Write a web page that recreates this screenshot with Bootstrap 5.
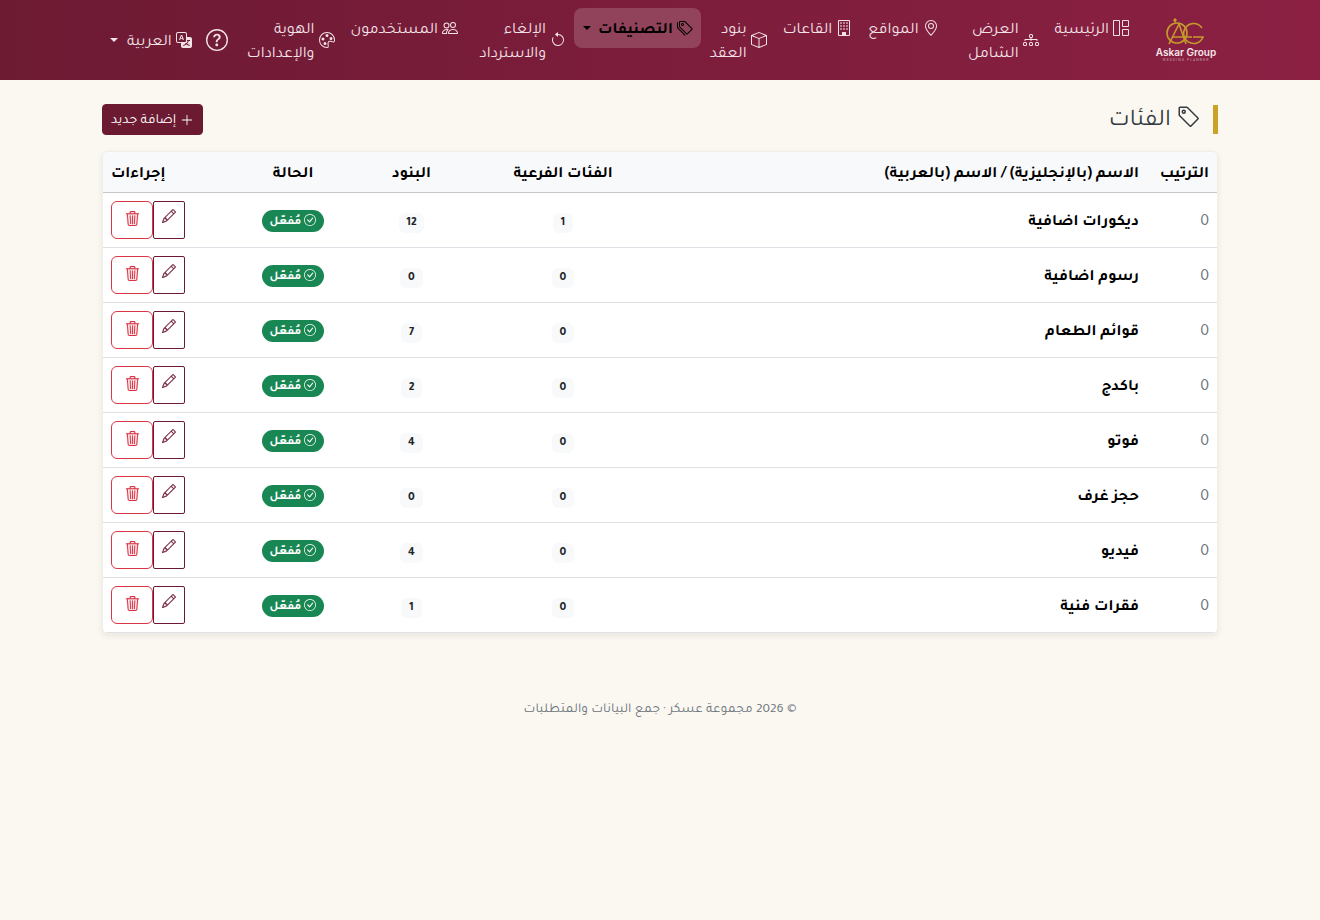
<!DOCTYPE html>
<html lang="ar" dir="rtl">
<head>
    <meta charset="UTF-8">
    <meta name="viewport" content="width=device-width, initial-scale=1.0">
    <title>الفئات</title>
    <link href="https://cdn.jsdelivr.net/npm/bootstrap@5.3.0/dist/css/bootstrap.min.css" rel="stylesheet">
    <style>
        body {
            background: #fbf8f1;
            font-family: "Tajawal", "DejaVu Sans", sans-serif;
            color: #212529;
        }
        .top-nav {
            height: 80px;
            padding: 0;
            background: linear-gradient(90deg, #6d1a33, #8b2043);
        }
        .top-nav .navbar-brand { margin: 0 0 0 18px; padding: 0; line-height: 0; }
        .top-nav .navbar-nav { align-items: flex-start; padding-right: 0; }
        .top-nav .nav-link {
            display: flex;
            align-items: center;
            gap: 4px;
            padding: 8px;
            color: #f3e3e8;
            font-size: 16px;
            line-height: 24px;
            white-space: nowrap;
            border-radius: 8px;
        }
        .top-nav .nav-link span { display: block; margin: 3px 0 -3px; }
        .top-nav .nav-link.active {
            padding-left: 9px;
            background: rgba(255,255,255,.17);
            color: #000;
            font-weight: 700;
        }
        .top-nav .dropdown-toggle::after { margin: 0 3px 0 0; }
        .top-nav .lang-toggle::after { margin-right: 5px; }
        .top-nav .nav-link .box-overview { width: 64px; }
        .top-nav .nav-link .box-undo { width: 72px; }
        .item-gap { margin-left: 1px; }
        .nav-ico { width: 16px; height: 16px; flex: none; fill: currentColor; }
        .help-ico { width: 22px; height: 22px; fill: #f3e3e8; }
        .nav-tools { gap: 6px; }
        .page-head { margin: 24px 0 16px; }
        .page-title { font-size: 24px; font-weight: 400; color: #343a40; border-right: 5px solid #c9a227; padding-right: 12px; margin: 0; line-height: 29px; gap: 6px; }
        .page-title svg { width: 24px; height: 24px; fill: currentColor; align-self: flex-start; }
        .page-title span { display: block; margin: 3px 0 -3px; }
        .add-btn, .add-btn:hover { background: #6b1a32; border-color: #6b1a32; color: #fff; }
        .add-btn svg { width: 14px; height: 14px; fill: currentColor; }
        .add-btn span { display: block; margin: 2px 0 -2px; }
        .cat-card { border-radius: 6px; border-color: #f1eee8; overflow: hidden; box-shadow: 0 2px 6px rgba(0,0,0,.08); }
        .cat-table { table-layout: fixed; margin: 0; font-size: 16px; }
        .cat-table th { padding: 11px 8px 5px; background: #f8f9fa; color: #000; font-weight: 700; vertical-align: middle; text-align: right; white-space: nowrap; border-bottom: 1px solid #c6c8ca; }
        .cat-table td { padding: 11px 8px 5px; vertical-align: middle; text-align: right; border-bottom: 1px solid #dee2e6; }
        .cat-table .col-mid { text-align: center; padding-right: 0; padding-left: 0; }
        .cat-table td.col-status { padding-top: 10px; padding-bottom: 6px; }
        .cat-table .col-act { text-align: left; }
        .cat-table td.col-act { padding: 8px; }
        .w-order { width: 70px; }
        .w-name { width: 452px; }
        .w-sub { width: 264px; }
        .w-items { width: 39px; }
        .w-status { width: 198px; }
        .w-act { width: 91px; }
        .order-num { color: #6c757d; }
        .cat-name { font-weight: 700; color: #000; }
        .status-ico { width: 12px; height: 12px; fill: currentColor; vertical-align: -2px; margin-left: 3px; }
        .act-wrap { display: flex; flex-direction: row-reverse; justify-content: flex-end; width: 74px; margin-right: auto; }
        .del-btn, .edit-btn { display: flex; align-items: flex-start; justify-content: center; height: 38px; padding: 0; background: #fff; }
        .del-btn { width: 42px; padding-top: 9px; border: 1px solid #dc3545; border-radius: 6px; color: #dc3545; }
        .edit-btn { width: 32px; padding-top: 7px; border: 1px solid #6b1a32; border-radius: 2px; color: #6b1a32; }
        .del-btn svg, .edit-btn svg { fill: currentColor; stroke: currentColor; stroke-width: .25; }
        .del-btn svg { width: 15px; height: 15px; }
        .edit-btn svg { width: 14px; height: 14px; }
        .page-foot { color: #6c757d; font-size: 13.6px; margin-top: 66px; }
    </style>
</head>
<body>
    <nav class="navbar navbar-expand top-nav">
        <div class="container">
            <a class="navbar-brand" href="#">
                <svg width="63" height="44" viewBox="0 0 63 44">
                    <g fill="none" stroke="#c49a2c" stroke-width="1.6">
                        <circle cx="22" cy="15" r="10"/>
                        <path d="M14 26 24 6l7 20M17 19h20"/>
                        <path d="M47 10a10 10 0 1 0 1 9H38"/>
                    </g>
                    <path d="M18 2l2-2 2 2-2 3z" fill="#c49a2c"/>
                    <text x="31" y="38" text-anchor="middle" fill="#f6e6ea" font-size="10" font-weight="600" font-family="Inter, sans-serif" direction="ltr">Askar Group</text>
                    <text x="31" y="43" text-anchor="middle" fill="#c79aa8" font-size="3.500" letter-spacing="1" font-family="Roboto, sans-serif" direction="ltr">WEDDING PLANNER</text>
                </svg>
            </a>
            <ul class="navbar-nav ms-auto">
                <li class="nav-item"><a class="nav-link" href="#"><svg class="nav-ico" viewBox="0 0 16 16"><path d="M1 0h5a1 1 0 0 1 1 1v14a1 1 0 0 1-1 1H1a1 1 0 0 1-1-1V1a1 1 0 0 1 1-1m0 1v14h5V1zm9-1h5a1 1 0 0 1 1 1v5a1 1 0 0 1-1 1h-5a1 1 0 0 1-1-1V1a1 1 0 0 1 1-1m0 1v5h5V1zm0 8h5a1 1 0 0 1 1 1v5a1 1 0 0 1-1 1h-5a1 1 0 0 1-1-1v-5a1 1 0 0 1 1-1m0 1v5h5v-5z"/></svg><span>الرئيسية</span></a></li>
                <li class="nav-item"><a class="nav-link" href="#"><svg class="nav-ico" viewBox="0 0 16 16"><path d="M6 3.5A1.5 1.5 0 0 1 7.5 2h1A1.5 1.5 0 0 1 10 3.5v1A1.5 1.5 0 0 1 8.5 6v1H14a.5.5 0 0 1 .5.5v1a.5.5 0 0 1-1 0V8h-5v.5a.5.5 0 0 1-1 0V8h-5v.5a.5.5 0 0 1-1 0v-1A.5.5 0 0 1 2 7h5.5V6A1.5 1.5 0 0 1 6 4.5zM8.5 5a.5.5 0 0 0 .5-.5v-1a.5.5 0 0 0-.5-.5h-1a.5.5 0 0 0-.5.5v1a.5.5 0 0 0 .5.5zM0 11.5A1.5 1.5 0 0 1 1.5 10h1A1.5 1.5 0 0 1 4 11.5v1A1.5 1.5 0 0 1 2.5 14h-1A1.5 1.5 0 0 1 0 12.5zm1.5-.5a.5.5 0 0 0-.5.5v1a.5.5 0 0 0 .5.5h1a.5.5 0 0 0 .5-.5v-1a.5.5 0 0 0-.5-.5zm4.5.5A1.5 1.5 0 0 1 7.5 10h1a1.5 1.5 0 0 1 1.5 1.5v1A1.5 1.5 0 0 1 8.5 14h-1A1.5 1.5 0 0 1 6 12.5zm1.5-.5a.5.5 0 0 0-.5.5v1a.5.5 0 0 0 .5.5h1a.5.5 0 0 0 .5-.5v-1a.5.5 0 0 0-.5-.5zm4.5.5a1.5 1.5 0 0 1 1.5-1.5h1a1.5 1.5 0 0 1 1.5 1.5v1a1.5 1.5 0 0 1-1.5 1.5h-1a1.5 1.5 0 0 1-1.5-1.5zm1.5-.5a.5.5 0 0 0-.5.5v1a.5.5 0 0 0 .5.5h1a.5.5 0 0 0 .5-.5v-1a.5.5 0 0 0-.5-.5z"/></svg><span class="box-overview">العرض<br>الشامل</span></a></li>
                <li class="nav-item"><a class="nav-link" href="#"><svg class="nav-ico" viewBox="0 0 16 16"><path d="M12.166 8.94c-.524 1.062-1.234 2.12-1.96 3.07A32 32 0 0 1 8 14.58a32 32 0 0 1-2.206-2.57c-.726-.95-1.436-2.008-1.96-3.07C3.304 7.867 3 6.862 3 6a5 5 0 0 1 10 0c0 .862-.305 1.867-.834 2.94M8 16s6-5.686 6-10A6 6 0 0 0 2 6c0 4.314 6 10 6 10"/><path d="M8 8a2 2 0 1 1 0-4 2 2 0 0 1 0 4m0 1a3 3 0 1 0 0-6 3 3 0 0 0 0 6"/></svg><span>المواقع</span></a></li>
                <li class="nav-item"><a class="nav-link" href="#"><svg class="nav-ico" viewBox="0 0 16 16"><path d="M2 1a1 1 0 0 1 1-1h10a1 1 0 0 1 1 1v14a1 1 0 0 1-1 1H3a1 1 0 0 1-1-1zm11 0H3v14h3v-2.5a.5.5 0 0 1 .5-.5h3a.5.5 0 0 1 .5.5V15h3z"/><path d="M4 2.5h2v1H4zm3 0h2v1H7zm3 0h2v1h-2zM4 5.500h2v1H4zm3 0h2v1H7zm3 0h2v1h-2zM4 8.500h2v1H4zm3 0h2v1H7zm3 0h2v1h-2z"/></svg><span>القاعات</span></a></li>
                <li class="nav-item item-gap"><a class="nav-link" href="#"><svg class="nav-ico" viewBox="0 0 16 16"><path d="M8.186 1.113a.5.5 0 0 0-.372 0L1.846 3.5 8 5.961 14.154 3.5zM15 4.239l-6.5 2.6v7.922l6.500-2.600V4.240zM7.500 14.762V6.838L1 4.239v7.925zM7.443.184a1.500 1.500 0 0 1 1.114 0l7.129 2.852A.5.5 0 0 1 16 3.500v8.662a1 1 0 0 1-.629.928l-7.185 2.874a.5.5 0 0 1-.372 0L.63 13.090a1 1 0 0 1-.63-.928V3.500a.5.5 0 0 1 .314-.464z"/></svg><span>بنود<br>العقد</span></a></li>
                <li class="nav-item dropdown"><a class="nav-link active dropdown-toggle" href="#"><svg class="nav-ico" viewBox="0 0 16 16"><path d="M3 2v4.586l7 7L14.586 9l-7-7zM2 2a1 1 0 0 1 1-1h4.586a1 1 0 0 1 .707.293l7 7a1 1 0 0 1 0 1.414l-4.586 4.586a1 1 0 0 1-1.414 0l-7-7A1 1 0 0 1 2 6.586z"/><path d="M5.500 5a.5.5 0 1 1 0-1 .5.5 0 0 1 0 1m0 1a1.500 1.500 0 1 0 0-3 1.500 1.500 0 0 0 0 3M1 7.086a1 1 0 0 0 .293.707L8.750 15.250l-.043.043a1 1 0 0 1-1.414 0l-7-7A1 1 0 0 1 0 7.586V3a1 1 0 0 1 1-1z"/></svg><span>التصنيفات</span></a></li>
                <li class="nav-item"><a class="nav-link" href="#"><svg class="nav-ico" viewBox="0 0 16 16"><path d="M8 3a5 5 0 1 1-4.546 2.914.5.5 0 0 0-.908-.417A6 6 0 1 0 8 2z"/><path d="M8 4.466V.534a.25.25 0 0 0-.41-.192L5.230 2.308a.25.25 0 0 0 0 .384l2.360 1.966A.25.25 0 0 0 8 4.466"/></svg><span class="box-undo">الإلغاء<br>والاسترداد</span></a></li>
                <li class="nav-item"><a class="nav-link" href="#"><svg class="nav-ico" viewBox="0 0 16 16"><path d="M15 14s1 0 1-1-1-4-5-4-5 3-5 4 1 1 1 1zm-7.978-1L7 12.996c.001-.264.167-1.030.76-1.720C8.312 10.629 9.282 10 11 10c1.717 0 2.687.63 3.240 1.276.593.69.758 1.457.76 1.720l-.008.002-.014.002zM11 7a2 2 0 1 0 0-4 2 2 0 0 0 0 4m3-2a3 3 0 1 1-6 0 3 3 0 0 1 6 0M6.936 9.280a6 6 0 0 0-1.230-.247A7 7 0 0 0 5 9c-4 0-5 3-5 4q0 1 1 1h4.216A2.240 2.240 0 0 1 5 13c0-1.010.377-2.042 1.090-2.904.243-.294.526-.569.846-.816M4.920 10A5.500 5.500 0 0 0 4 13H1c0-.26.164-1.030.76-1.724.545-.636 1.492-1.256 3.160-1.275ZM1.500 5.500a3 3 0 1 1 6 0 3 3 0 0 1-6 0m3-2a2 2 0 1 0 0 4 2 2 0 0 0 0-4"/></svg><span>المستخدمون</span></a></li>
                <li class="nav-item"><a class="nav-link" href="#"><svg class="nav-ico" viewBox="0 0 16 16"><path d="M8 5a1.500 1.500 0 1 0 0-3 1.500 1.500 0 0 0 0 3m4 3a1.500 1.500 0 1 0 0-3 1.500 1.500 0 0 0 0 3M5.500 7a1.500 1.500 0 1 1-3 0 1.500 1.500 0 0 1 3 0m.5 6a1.500 1.500 0 1 0 0-3 1.500 1.500 0 0 0 0 3"/><path d="M16 8c0 3.150-1.866 2.585-3.567 2.070C11.420 9.763 10.465 9.473 10 10c-.603.683-.475 1.819-.351 2.920C9.826 14.495 9.996 16 8 16a8 8 0 1 1 8-8m-8 7c.611 0 .654-.171.655-.176.078-.146.124-.464.07-1.119-.014-.168-.037-.37-.061-.591-.052-.464-.112-1.005-.118-1.462-.01-.707.083-1.610.704-2.314.369-.417.845-.578 1.272-.618.404-.038.812.026 1.160.104.343.077.702.186 1.025.284l.028.008c.346.105.658.199.953.266.653.148.904.083.991.024C14.717 9.380 15 9.161 15 8a7 7 0 1 0-7 7"/></svg><span>الهوية<br>والإعدادات</span></a></li>
            </ul>
            <div class="d-flex align-items-center nav-tools">
                <svg class="help-ico" viewBox="0 0 16 16"><path d="M8 15A7 7 0 1 1 8 1a7 7 0 0 1 0 14m0 1A8 8 0 1 0 8 0a8 8 0 0 0 0 16"/><path d="M5.255 5.786a.237.237 0 0 0 .241.247h.825c.138 0 .248-.113.266-.25.09-.656.54-1.134 1.342-1.134.686 0 1.314.343 1.314 1.168 0 .635-.374.927-.965 1.371-.673.489-1.206 1.060-1.168 1.987l.003.217a.25.25 0 0 0 .25.246h.811a.25.25 0 0 0 .25-.25v-.105c0-.718.273-.927 1.010-1.486.609-.463 1.244-.977 1.244-2.056 0-1.511-1.276-2.241-2.673-2.241-1.267 0-2.655.59-2.750 2.286m1.557 5.763c0 .533.425.927 1.010.927.609 0 1.028-.394 1.028-.927 0-.552-.42-.94-1.029-.94-.584 0-1.009.388-1.009.94"/></svg>
                <div class="dropdown"><a class="nav-link dropdown-toggle lang-toggle" href="#"><svg class="nav-ico" viewBox="0 0 16 16"><path d="M4.545 6.714 4.110 8H3l1.862-5h1.284L8 8H6.833l-.435-1.286zm1.634-.736L5.500 3.956h-.049l-.679 2.022z"/><path d="M0 2a2 2 0 0 1 2-2h7a2 2 0 0 1 2 2v3h3a2 2 0 0 1 2 2v7a2 2 0 0 1-2 2H7a2 2 0 0 1-2-2v-3H2a2 2 0 0 1-2-2zm2-1a1 1 0 0 0-1 1v7a1 1 0 0 0 1 1h7a1 1 0 0 0 1-1V2a1 1 0 0 0-1-1zm7.138 9.995q.289.451.63.846c-.748.575-1.673 1.001-2.768 1.292.178.217.451.635.555.867 1.125-.359 2.080-.844 2.886-1.494.777.665 1.739 1.165 2.930 1.472.133-.254.414-.673.629-.89-1.125-.253-2.057-.694-2.820-1.284.681-.747 1.222-1.651 1.621-2.757H14V8h-3v1.047h.765c-.318.844-.74 1.546-1.272 2.130a6 6 0 0 1-.415-.492 2 2 0 0 1-.94.31"/></svg><span>العربية</span></a></div>
            </div>
        </div>
    </nav>

    <main class="container">
        <div class="page-head d-flex justify-content-between align-items-center">
            <h1 class="page-title d-flex align-items-center"><svg viewBox="0 0 16 16"><path d="M6 4.500a1.500 1.500 0 1 1-3 0 1.500 1.500 0 0 1 3 0m-1 0a.5.5 0 1 0-1 0 .5.5 0 0 0 1 0"/><path d="M2 1h4.586a1 1 0 0 1 .707.293l7 7a1 1 0 0 1 0 1.414l-4.586 4.586a1 1 0 0 1-1.414 0l-7-7A1 1 0 0 1 1 6.586V2a1 1 0 0 1 1-1m0 5.586 7 7L13.586 9l-7-7H2z"/></svg><span>الفئات</span></h1>
            <a class="btn btn-sm add-btn d-flex align-items-center gap-1" href="#"><svg viewBox="0 0 16 16"><path d="M8 2a.5.5 0 0 1 .5.5v5h5a.5.5 0 0 1 0 1h-5v5a.5.5 0 0 1-1 0v-5h-5a.5.5 0 0 1 0-1h5v-5A.5.5 0 0 1 8 2"/></svg><span>إضافة جديد</span></a>
        </div>
        <div class="card cat-card">
            <table class="table cat-table">
                <thead>
                    <tr>
                        <th class="w-order">الترتيب</th>
                        <th class="w-name">الاسم (بالإنجليزية) / الاسم (بالعربية)</th>
                        <th class="w-sub col-mid">الفئات الفرعية</th>
                        <th class="w-items col-mid">البنود</th>
                        <th class="w-status col-mid">الحالة</th>
                        <th class="w-act col-act">إجراءات</th>
                    </tr>
                </thead>
                <tbody id="catRows"></tbody>
            </table>
        </div>
        <p class="page-foot text-center">© 2026 مجموعة عسكر · جمع البيانات والمتطلبات</p>
    </main>

    <script>
        const cats = [
            ['ديكورات اضافية', 1, 12], ['رسوم اضافية', 0, 0], ['قوائم الطعام', 0, 7], ['باكدج', 0, 2],
            ['فوتو', 0, 4], ['حجز غرف', 0, 0], ['فيديو', 0, 4], ['فقرات فنية', 0, 1]
        ];
        const check = '<svg class="status-ico" viewBox="0 0 16 16"><path d="M8 15A7 7 0 1 1 8 1a7 7 0 0 1 0 14m0 1A8 8 0 1 0 8 0a8 8 0 0 0 0 16"/><path d="M10.970 4.970a.235.235 0 0 0-.02.022L7.477 9.417 5.384 7.323a.75.75 0 0 0-1.060 1.060L6.970 11.030a.75.75 0 0 0 1.079-.02l3.992-4.990a.75.75 0 0 0-1.071-1.050"/></svg>';
        const pencil = '<svg viewBox="0 0 16 16"><path d="M12.146.146a.5.5 0 0 1 .708 0l3 3a.5.5 0 0 1 0 .708l-10 10a.5.5 0 0 1-.168.11l-5 2a.5.5 0 0 1-.65-.65l2-5a.5.5 0 0 1 .11-.168zM11.207 2.500 13.500 4.793 14.793 3.500 12.500 1.207zm1.586 3L10.500 3.207 4 9.707V10h.5a.5.5 0 0 1 .5.5v.5h.5a.5.5 0 0 1 .5.5v.5h.293zm-9.761 5.175-.106.106-1.528 3.821 3.821-1.528.106-.106A.5.5 0 0 1 5 12.500V12h-.5a.5.5 0 0 1-.5-.5V11h-.5a.5.5 0 0 1-.468-.325"/></svg>';
        const trash = '<svg viewBox="0 0 16 16"><path d="M6.500 1h3a.5.5 0 0 1 .5.5v1H6v-1a.5.5 0 0 1 .5-.5M11 2.500v-1A1.500 1.500 0 0 0 9.500 0h-3A1.500 1.500 0 0 0 5 1.500v1H1.500a.5.5 0 0 0 0 1h.538l.853 10.660A2 2 0 0 0 4.885 16h6.230a2 2 0 0 0 1.994-1.840l.853-10.660h.538a.5.5 0 0 0 0-1zm1.958 1-.846 10.580a1 1 0 0 1-.997.92h-6.230a1 1 0 0 1-.997-.92L3.042 3.500zm-7.487 1a.5.5 0 0 1 .528.47l.5 8.500a.5.5 0 0 1-.998.06L5 5.030a.5.5 0 0 1 .47-.53m5.058 0a.5.5 0 0 1 .47.53l-.5 8.500a.5.5 0 1 1-.998-.06l.5-8.500a.5.5 0 0 1 .528-.47M8 4.500a.5.5 0 0 1 .5.5v8.500a.5.5 0 0 1-1 0V5a.5.5 0 0 1 .5-.5"/></svg>';

        document.getElementById('catRows').innerHTML = cats.map(c => `
            <tr>
                <td class="order-num">0</td>
                <td class="cat-name">${c[0]}</td>
                <td class="col-mid"><span class="badge bg-light text-dark">${c[1]}</span></td>
                <td class="col-mid"><span class="badge bg-light text-dark">${c[2]}</span></td>
                <td class="col-mid col-status"><span class="badge rounded-pill bg-success">${check}مُفعّل</span></td>
                <td class="col-act"><div class="act-wrap"><button class="del-btn">${trash}</button><button class="edit-btn">${pencil}</button></div></td>
            </tr>`).join('');
    </script>
    <script src="https://cdn.jsdelivr.net/npm/bootstrap@5.3.0/dist/js/bootstrap.bundle.min.js"></script>
</body>
</html>
